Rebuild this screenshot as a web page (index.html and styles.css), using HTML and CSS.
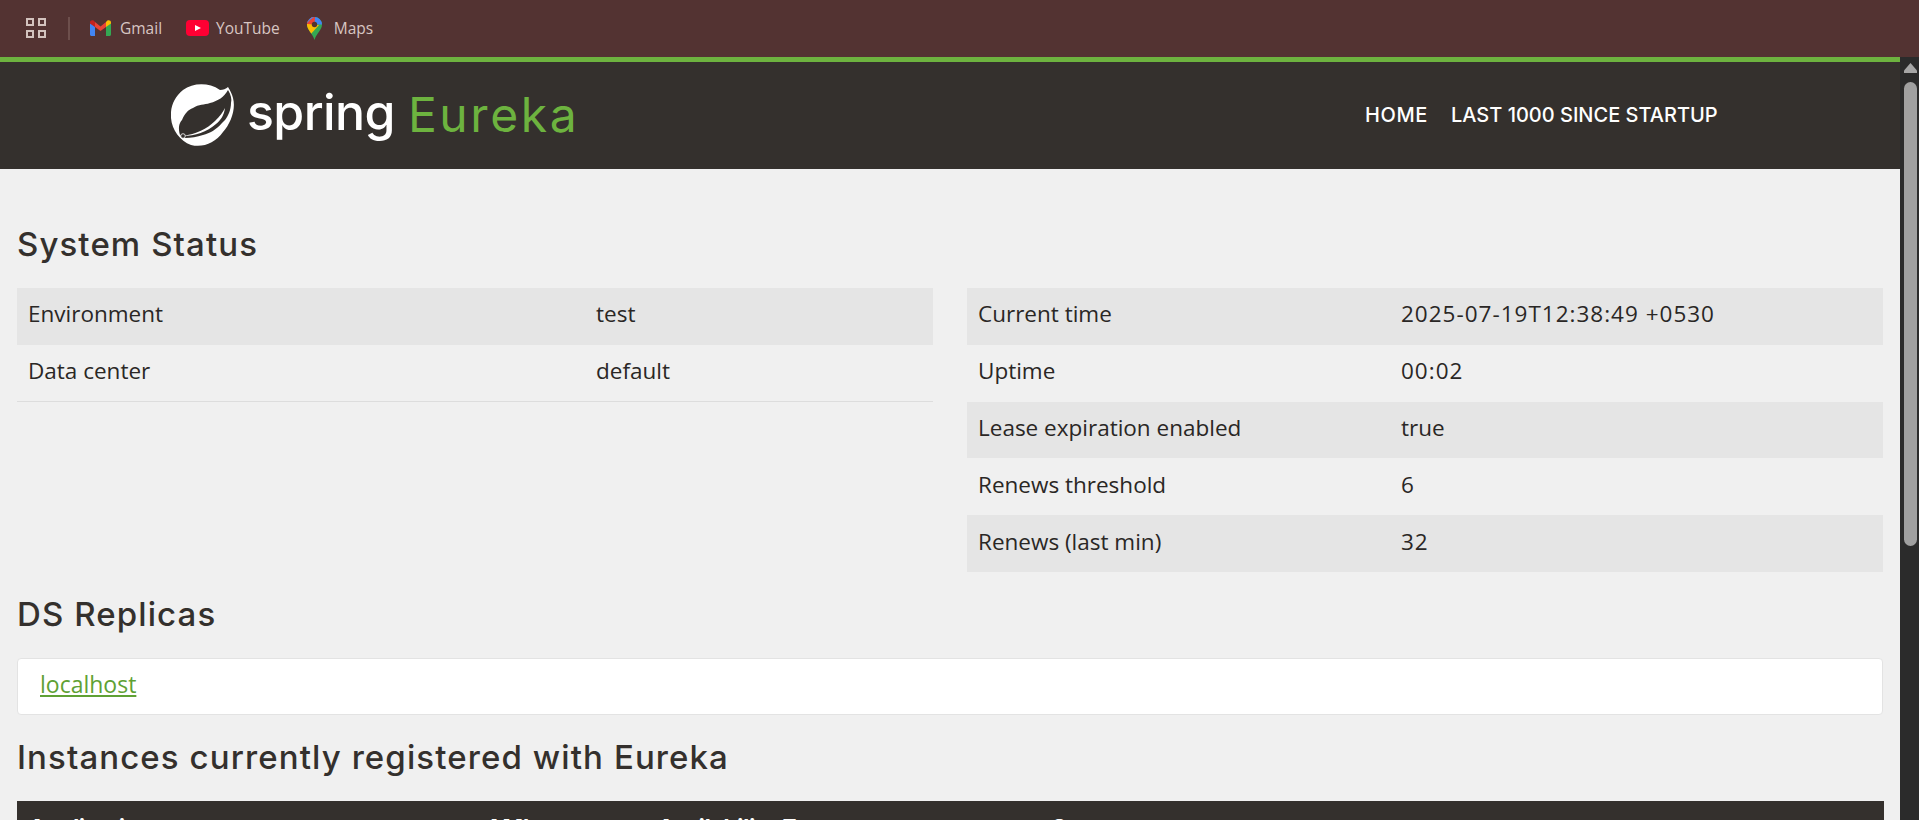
FILE: index.html
```html
<!DOCTYPE html>
<html lang="en">
<head>
<meta charset="utf-8">
<title>Eureka</title>
<link rel="stylesheet" href="styles.css">
</head>
<body>
<div class="bookmarks">
  <svg class="apps" width="20" height="20" viewBox="0 0 20 20"><g fill="none" stroke="#d3c3be" stroke-width="2"><rect x="1" y="1" width="6" height="6"/><rect x="13" y="1" width="6" height="6"/><rect x="1" y="13" width="6" height="6"/><rect x="13" y="13" width="6" height="6"/></g></svg>
  <span class="divider"></span>
  <a class="mark mark-gmail"><svg width="21" height="16" viewBox="0 0 21 16"><path d="M0 3v11.500C0 15.300.7 16 1.500 16H5V6.500z" fill="#4285f4"/><path d="M21 3v11.500c0 .8-.7 1.500-1.500 1.500H16V6.500z" fill="#34a853"/><path d="M5 2 10.500 6.500 16 2v5L10.500 11 5 7z" fill="#ea4335"/><path d="M16 2v5l5-3.500V2.300C21 .5 18.800-.5 17.400.6z" fill="#fbbc04"/><path d="M5 2v5L0 3.500V2.300C0 .5 2.200-.5 3.600.6z" fill="#c5221f"/></svg><span class="mark-text">Gmail</span></a>
  <a class="mark mark-yt"><svg width="23" height="16" viewBox="0 0 23 16"><rect width="23" height="16" rx="4" fill="#ff0033"/><path d="M9 5l6 3-6 3z" fill="#fff"/></svg><span class="mark-text">YouTube</span></a>
  <a class="mark mark-maps"><svg width="15" height="23" viewBox="0 0 15 23"><clipPath id="pin"><path d="M7.500 0A7.500 7.500 0 0 0 0 7.500C0 13 5.500 16 7.500 23 9.500 16 15 13 15 7.500A7.500 7.500 0 0 0 7.500 0z"/></clipPath><g clip-path="url(#pin)"><rect width="15" height="23" fill="#34a853"/><path d="M0 0h15v7.500H9z" fill="#4285f4"/><path d="M0 0h8L7.500 7.500 0 9z" fill="#ea4335"/><path d="M0 7 7.500 7.500 12 8 3 18 0 14z" fill="#fbbc04"/><path d="M0 0h7L3 3 0 6z" fill="#4285f4"/></g><circle cx="7.500" cy="7.500" r="2.700" fill="#53332f"/></svg><span class="mark-text">Maps</span></a>
</div>
<div class="page">
  <header class="topbar">
    <div class="brand">
      <svg class="leaf" width="64" height="63" viewBox="0 0 64 63"><path fill="#fff" d="M49 6C37-2 22-1 12 6 3 13-1 24 0 34 1 46 9 57 20 61 32 64 44 59 52 48 60 39 65 25 62 14 61 10 59 6 57 3 55 5 52 6 49 6z"/><path fill="#34302d" d="M9 51C7 44 8 39 11 36 14 29 17 26 22 24 28 20 33 21 39 19 47 17 53 13 57 6 60 11 61 15 60 19 60 26 57 32 54 36 53 37 52 38 51 39 45 46 39 49 32 51 26 53 20 54 14 54z"/><path fill="#fff" d="M12 52C25 50 36 45 44 37 49 32 52 28 54 24 53 31 50 36 45 40 36 48 24 52 12 52z"/><circle cx="12" cy="52" r="2.300" fill="#34302d" stroke="#fff" stroke-width=".8"/></svg>
      <span class="word-spring">spring</span>
      <span class="word-eureka">Eureka</span>
    </div>
    <nav class="nav"><a class="nav-home">HOME</a><a>LAST 1000 SINCE STARTUP</a></nav>
  </header>
  <main class="content">
    <h1 class="title first">System Status</h1>
    <div class="status">
      <table class="grid">
        <tr class="odd"><td class="c-env">Environment</td><td>test</td></tr>
        <tr class="even last"><td>Data center</td><td>default</td></tr>
      </table>
      <table class="grid">
        <tr class="odd"><td class="c-time">Current time</td><td class="num">2025-07-19T12:38:49 +0530</td></tr>
        <tr class="even"><td>Uptime</td><td class="num">00:02</td></tr>
        <tr class="odd"><td>Lease expiration enabled</td><td>true</td></tr>
        <tr class="even"><td>Renews threshold</td><td class="num">6</td></tr>
        <tr class="odd"><td>Renews (last min)</td><td class="num">32</td></tr>
      </table>
    </div>
    <h1 class="title">DS Replicas</h1>
    <div class="well"><a class="replica">localhost</a></div>
    <h1 class="title">Instances currently registered with Eureka</h1>
    <div class="thead">
      <span class="th-app">Application</span><span class="th-ami">AMIs</span><span class="th-az">Availability Zones</span><span>Status</span>
    </div>
  </main>
</div>
<div class="scrollbar">
  <svg class="sb-arrow" width="13" height="10" viewBox="0 0 13 10"><path d="M6.500 0 13 7.500V10H0V7.500z" fill="#a6a6a6"/></svg>
  <div class="sb-thumb"></div>
</div>
</body>
</html>
```

FILE: styles.css
```css
* { box-sizing: border-box; }
html, body { margin: 0; height: 100%; overflow: hidden; }
body {
  background: #f0f0f0;
  color: #2a2725;
  font-family: "Open Sans", "Noto Sans", sans-serif;
  display: grid;
  grid-template-columns: 1fr 19px;
  grid-template-rows: 57px 1fr;
  width: 1919px;
  height: 820px;
}
.bookmarks {
  grid-column: 1 / 3;
  background: #533332;
  display: flex;
  align-items: center;
  height: 57px;
  padding: 0 0 1px 26px;
  font-family: "Open Sans", sans-serif;
  font-size: 15.500px;
  color: #d8c6c2;
}
.divider { width: 2px; height: 23px; background: #6d4f4c; margin: 0 20px 0 22px; }
.mark { display: flex; align-items: center; }
.mark-text { padding-bottom: 1px; }
.mark-gmail { gap: 9px; margin-right: 24px; }
.mark-yt { gap: 7px; margin-right: 27px; }
.mark-maps { gap: 12px; }
.page { overflow: hidden; min-width: 0; }
.topbar {
  height: 112px;
  background: #34302d;
  border-top: 5px solid #6db33f;
  display: flex;
  align-items: center;
  padding-left: 171px;
}
.brand { display: flex; align-items: center; width: 1194px; height: 64px; }
.leaf { flex: none; }
.word-spring { color: #fff; font-family: "Inter", sans-serif; font-size: 50px; font-weight: 500; letter-spacing: -.6px; margin-left: 12px; line-height: 1; padding-bottom: 7px; }
.word-eureka { color: #6db33f; font-family: "Inter", sans-serif; font-size: 48px; font-weight: 400; margin-left: 13px; letter-spacing: 2.600px; line-height: 1; padding-bottom: 2px; }
.nav { display: flex; gap: 23px; color: #fff; font-family: "Inter", sans-serif; font-size: 20px; font-weight: 500; padding-bottom: 1px; }
.nav-home { letter-spacing: .6px; }
.content { padding: 0 17px; }
.title { margin: 0; font-family: "Inter", sans-serif; font-weight: 500; font-size: 33px; letter-spacing: 1.100px; line-height: 34px; color: #34302d; padding-top: 25px; padding-bottom: 27px; }
.title.first { padding-top: 58px; padding-bottom: 27px; }
.status { display: grid; grid-template-columns: 916px 916px; column-gap: 34px; }
.grid { border-collapse: collapse; width: 100%; font-size: 22.500px; align-self: start; }
.grid td { height: 56.800px; padding: 0 11px 5px; }
.odd { background: #e5e5e5; }
.last { border-bottom: 1px solid #ddd; }
.num { letter-spacing: 1px; }
.c-env { width: 568px; }
.c-time { width: 423px; }
.well {
  background: #fff;
  border: 1px solid #e3e3e3;
  border-radius: 4px;
  height: 57px;
  padding: 0 22px 4px;
  display: flex;
  align-items: center;
  font-size: 23px;
}
.replica { color: #5fa134; text-decoration: underline; }
.thead {
  background: #34302d;
  color: #fff;
  height: 60px;
  width: 1867px;
  padding: 13px 12px 0;
  font-family: "Inter", sans-serif;
  font-size: 22px;
  font-weight: 700;
  display: flex;
}
.th-app { width: 457px; }
.th-ami { width: 172px; }
.th-az { width: 394px; }
.scrollbar {
  background: #2b2b2b;
  display: flex;
  flex-direction: column;
  padding: 6px 0 0 4px;
  gap: 9px;
}
.sb-thumb { width: 13px; height: 464px; background: #a0a0a0; border-radius: 7px; }
```
